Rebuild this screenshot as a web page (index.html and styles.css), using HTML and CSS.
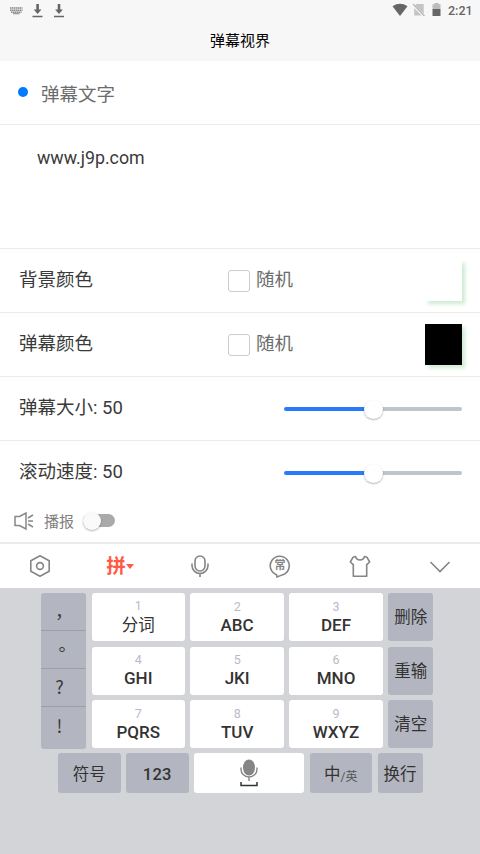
FILE: index.html
```html
<!DOCTYPE html>
<html lang="zh-CN">
<head>
<meta charset="utf-8">
<title>弹幕视界</title>
<link rel="stylesheet" href="styles.css">
</head>
<body>
<header class="header">
  <div class="status">
    <svg class="status-left" width="60" height="22" viewBox="0 0 60 22">
      <path d="M10 8h12.500M10 10.200h12.500M11 12.200h10.500" stroke="#888" stroke-width="1.500" stroke-dasharray="1.500 .4"/>
      <path d="M13 13.700h6.500" stroke="#999" stroke-width="1.200"/>
      <g fill="#666"><path d="M36.300 4h2.600v5.500h2.600l-3.900 4.500-3.900-4.500h2.600zM32.500 15.700h10v1.500h-10z"/></g>
    </svg>
    <svg class="status-dl" width="12" height="22" viewBox="0 0 12 22"><path fill="#666" d="M4.700 4h2.600v5.500h2.600L6 14 2.100 9.500h2.600zM1 15.700h10v1.500H1z"/></svg>
    <svg class="status-right" width="54" height="22" viewBox="0 0 54 22">
      <path d="M0.500 6.200Q8 1.500 15.500 6.200L8 16z" fill="#666"/>
      <path d="M24.500 4h7.200v11.500h-9.500V6.300z" fill="#c4c4c4"/>
      <path d="M20.500 4.500l12 12" stroke="#f7f7f7" stroke-width="2.500"/><path d="M21 4l11.500 12" stroke="#b5b5b5" stroke-width="1.200"/>
      <path d="M42.500 3h4v1.300h2V9h-8V4.300h2z" fill="#bcbcbc"/><path d="M40.500 9h8v7h-8z" fill="#666"/>
    </svg>
    <span class="clock">2:21</span>
  </div>
  <h1 class="title">弹幕视界</h1>
</header>
<main class="settings">
  <div class="row row-first"><i class="dot"></i><span>弹幕文字</span></div>
  <div class="message">www.j9p.com</div>
  <div class="row"><span class="name">背景颜色</span><i class="check"></i><span class="random">随机</span><i class="swatch"></i></div>
  <div class="row"><span class="name">弹幕颜色</span><i class="check"></i><span class="random">随机</span><i class="swatch black"></i></div>
  <div class="row"><span class="name">弹幕大小: 50</span><div class="slider"><i class="thumb"></i></div></div>
  <div class="row last"><span class="name">滚动速度: 50</span><div class="slider"><i class="thumb"></i></div></div>
  <div class="speak">
    <svg width="20" height="20" viewBox="0 0 20 20" fill="none" stroke="#888" stroke-width="1.500"><path d="M1 5.500h4.500L12 2v16l-6.500-3.500H1zM14 7l5-3M14 10h5M14 13l5 3"/></svg>
    <span class="speak-label">播报</span><i class="toggle"></i>
  </div>
</main>
<section class="keyboard">
  <nav class="tools">
    <div class="tool"><svg width="24" height="24" viewBox="0 0 24 24" fill="none" stroke="#858585" stroke-width="1.600"><path d="M12 1.800l9.200 5v10.400l-9.200 5-9.200-5V6.800z" stroke-linejoin="round"/><circle cx="12" cy="12" r="3.400"/></svg></div>
    <div class="tool pinyin">拼<i class="caret"></i></div>
    <div class="tool"><svg width="24" height="24" viewBox="0 0 24 24" fill="none" stroke="#858585" stroke-width="1.600"><rect x="7" y="2" width="10" height="15" rx="5"/><path d="M4 9.500v2a8 8 0 0 0 16 0v-2M12 19.500V23"/></svg></div>
    <div class="tool"><span class="bubble"><svg width="24" height="24" viewBox="0 0 24 24" fill="none" stroke="#858585" stroke-width="1.600"><path d="M8.500 20.700A9.500 9.500 0 1 1 15.500 20.500Q12.500 21.500 9 23z"/></svg><b>常</b></span></div>
    <div class="tool"><svg width="24" height="24" viewBox="0 0 24 24" fill="none" stroke="#858585" stroke-width="1.600" stroke-linejoin="round"><path d="M7.500 2.500Q8.500 6 12 6t4.500-3.500l2.500.8 2.700 4.700-3 2.600V22.200h-13.400V10.600l-3-2.600L5 3.300z"/></svg></div>
    <div class="tool"><svg width="24" height="24" viewBox="0 0 24 24" fill="none" stroke="#858585" stroke-width="1.600"><path d="M2.500 8L12 17.500 21.500 8"/></svg></div>
  </nav>
  <div class="pad">
    <div class="punct"><span class="comma">，</span><span class="stop">。</span><span>?</span><span>!</span></div>
    <div class="keys">
      <div class="key"><small class="one">1</small><span class="han">分词</span></div>
      <div class="key"><small>2</small><span>ABC</span></div>
      <div class="key"><small>3</small><span>DEF</span></div>
      <div class="key side">删除</div>
      <div class="key"><small>4</small><span>GHI</span></div>
      <div class="key"><small>5</small><span>JKI</span></div>
      <div class="key"><small>6</small><span>MNO</span></div>
      <div class="key side">重输</div>
      <div class="key"><small>7</small><span>PQRS</span></div>
      <div class="key"><small>8</small><span>TUV</span></div>
      <div class="key"><small>9</small><span>WXYZ</span></div>
      <div class="key side">清空</div>
    </div>
  </div>
  <div class="bottom">
    <div class="key side">符号</div>
    <div class="key side num">123</div>
    <div class="key space"><svg width="20" height="30" viewBox="0 0 20 30"><ellipse cx="10" cy="9.500" rx="6" ry="8" fill="#858585"/><path d="M2 9.500v2a8 7.500 0 0 0 16 0v-2M10 19v4" fill="none" stroke="#858585" stroke-width="1.400"/><path d="M2 24v3.500h16V24" fill="none" stroke="#333" stroke-width="1.500"/></svg></div>
    <div class="key side lang">中<em>/英</em></div>
    <div class="key side">换行</div>
  </div>
</section>
</body>
</html>
```

FILE: styles.css
```css
* { box-sizing: border-box; }
body { margin: 0; width: 480px; height: 854px; overflow: hidden; background: #fff; color: #3a3a3a; font-family: Roboto, "Noto Sans CJK SC", sans-serif; display: flex; flex-direction: column; }
i, em { font-style: normal; }
svg { display: block; flex: none; }
.header { height: 61px; background: #f7f7f7; }
.status { height: 22px; display: flex; }
.status-left { flex: 0 0 60px; margin-right: -7px; }
.status-right { margin-left: 327px; }
.clock { margin-left: 2px; font-size: 12.5px; font-weight: 500; line-height: 22px; color: #666; }
.title { margin: 0; font-size: 15px; line-height: 38px; font-weight: 400; text-align: center; color: #000; }
.row { height: 64px; border-bottom: 1px solid #ebebeb; display: flex; align-items: center; padding: 0 18px 3px 19px; font-size: 18.5px; }
.row-first { color: #6c6c6c; padding: 0 18px; }
.dot { width: 10px; height: 10px; border-radius: 50%; background: #007aff; margin: 0 13px 1px 0; }
.message { height: 124px; border-bottom: 1px solid #ebebeb; padding: 21px 37px; font-size: 17.8px; line-height: 24px; }
.name { width: 209px; white-space: nowrap; margin-bottom: 3px; }
.check { width: 22px; height: 22px; border: 1px solid #ccc; border-radius: 3px; margin: 4px 6px 0 0; }
.random { color: #6c6c6c; margin-bottom: 3px; }
.swatch { width: 37px; height: 41px; margin: 3px 0 0 auto; background: #fff; box-shadow: 3px 3px 4px #cdebd0; }
.black { background: #000; }
.slider { width: 178px; height: 4px; margin: 4px 0 0 auto; border-radius: 2px; background: linear-gradient(90deg, #2979ff 50%, #c0c4cc 50%); display: flex; justify-content: center; align-items: center; }
.thumb { width: 19px; height: 19px; flex: none; border-radius: 50%; background: #fff; box-shadow: 0 1px 2px rgba(0,0,0,.3); }
.last { border-color: transparent; }
.speak { height: 37px; padding: 0 0 6px 14px; display: flex; align-items: center; }
.speak-label { font-size: 15px; line-height: 20px; color: #808080; margin: 2px 9px 0 10px; }
.toggle { width: 32px; height: 13px; border-radius: 7px; background: #aaa; display: flex; align-items: center; }
.toggle::before { content: ""; width: 18px; height: 18px; flex: none; border-radius: 50%; background: #fafafa; box-shadow: 0 1px 2px rgba(0,0,0,.3); }
.keyboard { flex: 1; background: #d3d4d8; border-top: 2px solid #ebebeb; }
.tools { height: 44px; background: #fff; display: flex; }
.tool { flex: 1; display: flex; align-items: center; justify-content: center; }
.pinyin { color: #ff5b43; font-size: 19.5px; font-weight: 700; line-height: 24px; padding-top: 1px; }
.caret { border: 4px solid transparent; border-top: 5px solid #ff5b43; border-bottom: 0; }
.bubble { position: relative; }
.bubble b { position: absolute; inset: 0; text-align: center; font-size: 11px; line-height: 23px; color: #858585; }
.pad { display: flex; gap: 5.5px; padding: 4.5px 0 0 41px; }
.punct { width: 45px; height: 156px; background: #b3b6c0; border-radius: 3px; display: grid; grid-template-rows: 38px 38px 38px 42px; font: 18px "Noto Sans CJK SC", sans-serif; overflow: hidden; }
.punct span { min-height: 0; display: flex; align-items: center; justify-content: center; border-bottom: 1px solid #9b9fac; padding: 0 8px 2px 0; line-height: 20px; }
.punct span:last-child { border: 0; padding-bottom: 6px; }
.punct .comma { padding: 0 0 2px 1px; }
.punct .stop { padding: 0 0 13px 8px; }
.keys { display: grid; grid-template-columns: 93.5px 93.5px 93.5px 45px; grid-auto-rows: 48px; gap: 5.4px; padding-top: .8px; }
.key { background: #fff; border-radius: 3px; display: flex; flex-direction: column; align-items: center; justify-content: center; font-size: 17px; font-weight: 500; line-height: 20px; color: #333; }
.key small { font-size: 12.5px; line-height: 14px; font-weight: 400; color: #b8b9c9; margin-bottom: 1px; }
.key .one { margin-bottom: 3px; }
.key .han { font-size: 16.5px; font-weight: 400; }
.side { background: #b3b6c0; font-weight: 400; font-size: 16.5px; padding-top: 2px; }
.bottom { display: flex; gap: 5.5px; padding: 4.8px 0 0 58px; }
.bottom .key { flex: 0 0 62.5px; height: 40px; }
.bottom .side { padding-top: 3px; }
.bottom .space { flex-basis: 110px; }
.bottom .key:last-child { flex-basis: 45px; }
.bottom .num { font-weight: 500; letter-spacing: .3px; }
.bottom .lang { flex-direction: row; align-items: center; }
.lang em { font-size: 12px; color: #555; margin-top: 5px; }
```
